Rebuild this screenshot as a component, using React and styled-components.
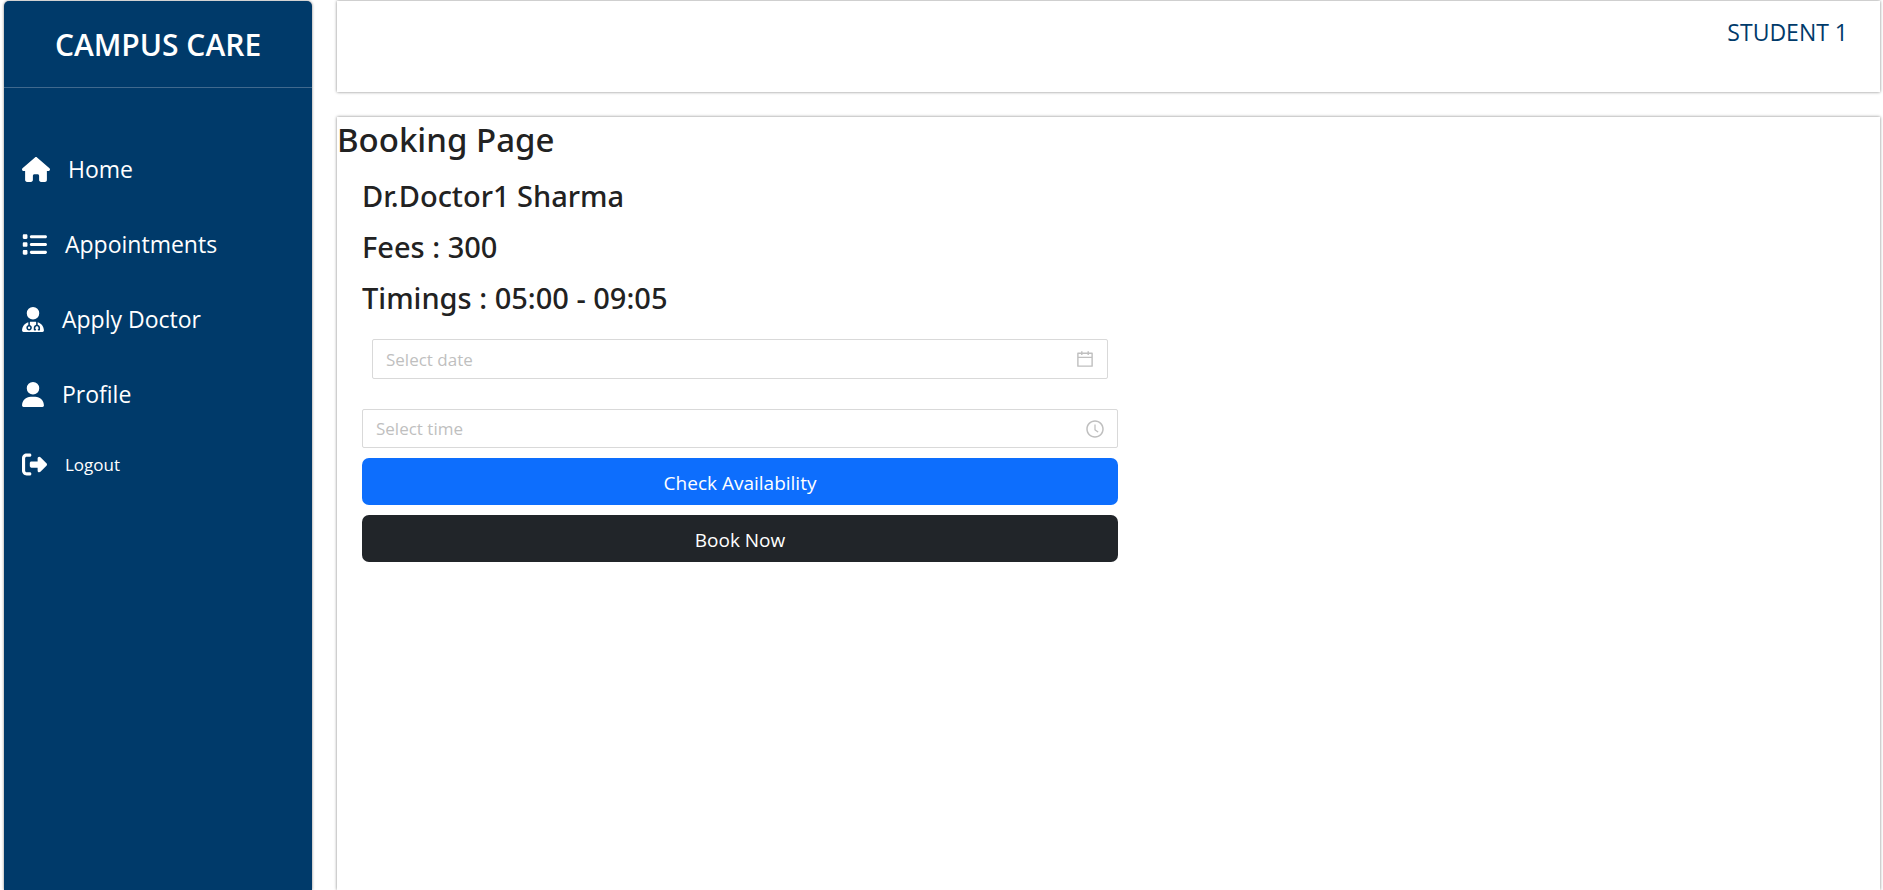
import React from "react";
import styled, { createGlobalStyle } from "styled-components";
import { FaHouse, FaList, FaUserDoctor, FaUser, FaRightFromBracket } from "react-icons/fa6";
import { AiOutlineCalendar, AiOutlineClockCircle } from "react-icons/ai";

const GlobalStyle = createGlobalStyle`
  *, *::before, *::after { box-sizing: border-box; }
  body {
    margin: 0;
    background: #fff;
    color: #222;
    font-family: "Segoe UI", "Open Sans", "Noto Sans", sans-serif;
    font-size: 18px;
  }
  h1, h2, p, ul { margin: 0; padding: 0; }
`;

const Layout = styled.div`
  display: flex;
  gap: 25px;
  min-height: 100vh;
  padding: 1px 3px 0 4px;
`;

const Sidebar = styled.aside`
  flex: 0 0 308px;
  background: #003a6a;
  color: #fff;
  border-radius: 5px 5px 0 0;
  box-shadow: 0 0 3px gray;
`;

const Logo = styled.p`
  height: 87px;
  padding-top: 24px;
  border-bottom: 1px solid #40698e;
  text-align: center;
  font-size: 30px;
  line-height: 40px;
  font-weight: 600;
`;

const Menu = styled.ul`
  display: flex;
  flex-direction: column;
  gap: 39px;
  padding: 63px 18px 0;
  list-style: none;
`;

const MenuLink = styled.a`
  display: flex;
  align-items: center;
  gap: 18px;
  height: 36px;
  color: #fff;
  font-size: ${(p) => (p.$small ? "17px" : "23px")};
  text-decoration: none;

  svg {
    width: ${(p) => p.$iconWidth}px;
    height: 25px;
  }
`;

const LogoutItem = styled.li`
  margin-top: -5px;
`;

const Main = styled.div`
  flex: 1;
  min-width: 0;
  display: flex;
  flex-direction: column;
  gap: 25px;
`;

const Header = styled.header`
  display: flex;
  justify-content: flex-end;
  height: 91px;
  padding: 13px 32px;
  box-shadow: 0 0 3px gray;
`;

const UserLink = styled.a`
  color: #003a6a;
  font-size: 23px;
  line-height: 36px;
  font-weight: 400;
  text-decoration: none;
`;

const Body = styled.main`
  flex: 1;
  box-shadow: 0 0 3px gray;
`;

const Title = styled.h1`
  font-family: "Segoe UI", "Noto Sans", "Open Sans", sans-serif;
  font-size: 33px;
  line-height: 45px;
  font-weight: 500;
`;

const Booking = styled.section`
  display: flex;
  flex-direction: column;
  gap: 10px;
  width: calc(49% + 25px);
  padding: 13px 0 0 25px;
`;

const Detail = styled.h2`
  font-family: "Segoe UI", "Noto Sans", "Open Sans", sans-serif;
  font-size: 29px;
  line-height: 41px;
  font-weight: 500;
`;

const Form = styled.form`
  display: flex;
  flex-direction: column;
  gap: 10px;
`;

const Picker = styled.label`
  display: flex;
  align-items: center;
  height: ${(p) => (p.$inset ? "40px" : "39px")};
  margin: ${(p) => (p.$inset ? "11px 10px 20px" : "0")};
  padding: 0 12px 0 13px;
  border: 1px solid #d9d9d9;
  border-radius: 2px;
  color: #bfbfbf;

  svg {
    width: 20px;
    height: 20px;
  }
`;

const PickerInput = styled.input`
  flex: 1;
  min-width: 0;
  padding: 0;
  border: 0;
  outline: 0;
  background: transparent;
  color: #222;
  font-family: inherit;
  font-size: 17px;

  &::placeholder {
    color: #bfbfbf;
    opacity: 1;
  }
`;

const Button = styled.button`
  height: 47px;
  padding: 2px 15px 0;
  border: 0;
  border-radius: 7px;
  background: ${(p) => (p.$dark ? "#212529" : "#0d6efd")};
  color: #fff;
  font-family: inherit;
  font-size: 19px;
`;

const menu = [
  { label: "Home", icon: FaHouse, width: 28 },
  { label: "Appointments", icon: FaList, width: 25 },
  { label: "Apply Doctor", icon: FaUserDoctor, width: 22 },
  { label: "Profile", icon: FaUser, width: 22 },
];

export default function App() {
  return (
    <>
      <GlobalStyle />
      <Layout>
        <Sidebar>
          <Logo>CAMPUS CARE</Logo>
          <nav>
            <Menu>
              {menu.map(({ label, icon: Icon, width }) => (
                <li key={label}>
                  <MenuLink href="#" $iconWidth={width}>
                    <Icon aria-hidden="true" />
                    {label}
                  </MenuLink>
                </li>
              ))}
              <LogoutItem>
                <MenuLink href="#" $iconWidth={25} $small>
                  <FaRightFromBracket aria-hidden="true" />
                  Logout
                </MenuLink>
              </LogoutItem>
            </Menu>
          </nav>
        </Sidebar>
        <Main>
          <Header>
            <UserLink href="#">STUDENT 1</UserLink>
          </Header>
          <Body>
            <Title>Booking Page</Title>
            <Booking>
              <Detail>Dr.Doctor1 Sharma</Detail>
              <Detail>Fees : 300</Detail>
              <Detail>Timings : 05:00 - 09:05</Detail>
              <Form>
                <Picker $inset>
                  <PickerInput type="text" placeholder="Select date" aria-label="Select date" />
                  <AiOutlineCalendar aria-hidden="true" />
                </Picker>
                <Picker>
                  <PickerInput type="text" placeholder="Select time" aria-label="Select time" />
                  <AiOutlineClockCircle aria-hidden="true" />
                </Picker>
                <Button type="button">Check Availability</Button>
                <Button type="button" $dark>Book Now</Button>
              </Form>
            </Booking>
          </Body>
        </Main>
      </Layout>
    </>
  );
}
